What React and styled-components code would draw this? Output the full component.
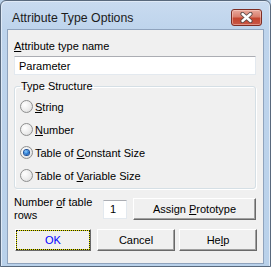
import React from "react";
import styled, { createGlobalStyle } from "styled-components";

const GlobalStyle = createGlobalStyle`
  html, body {
    margin: 0;
    padding: 0;
    background: #b9d1ea;
  }
  body {
    font-family: "Liberation Sans", Arial, sans-serif;
    font-size: 11px;
    color: #000;
  }
`;

const Window = styled.div`
  box-sizing: border-box;
  width: 271px;
  height: 267px;
  border: 1px solid #59697d;
  border-radius: 6px 6px 0 0;
  background: linear-gradient(to bottom, #c9dbf0 0px, #bed4ec 28px, #b9d1ea 100%);
  box-shadow: inset -1px 0 0 #dfeaf7, inset 1px 1px 0 #dfeaf7;
  display: flex;
  flex-direction: column;
  padding: 0 6px 2px;
`;

const TitleBar = styled.div`
  height: 28px;
  flex: none;
  display: flex;
  align-items: center;
  justify-content: space-between;
  padding: 5px 2px 0 5px;
  box-sizing: border-box;
`;

const Title = styled.div`
  font-family: "Liberation Sans", Arial, sans-serif;
  font-size: 12.3px;
  color: #1b1b1b;
`;

const CloseButton = styled.div`
  box-sizing: border-box;
  width: 31px;
  height: 17px;
  border: 1px solid #7d2d24;
  border-radius: 3px;
  background: linear-gradient(to bottom, #e9a99d 0%, #d97f6e 45%, #c4452f 55%, #c95746 100%);
  box-shadow: inset 0 0 0 1px rgba(255, 220, 210, 0.45);
  display: flex;
  align-items: center;
  justify-content: center;
`;

const Client = styled.div`
  flex: 1;
  background: #f0f0f0;
  border: 1px solid #8fa3bd;
  padding: 0 7px 0 6px;
  display: flex;
  flex-direction: column;
`;

const Label = styled.div`
  line-height: 13px;
  margin-top: ${(p) => p.$top || 0}px;
`;

const Key = styled.span`
  text-decoration: underline;
`;

const TextBox = styled.div`
  box-sizing: border-box;
  height: ${(p) => p.$h || 19}px;
  width: ${(p) => (p.$w ? `${p.$w}px` : "auto")};
  margin-top: ${(p) => p.$top || 0}px;
  background: #fff;
  border: 1px solid #e3e9ef;
  border-top-color: #abadb3;
  padding-left: ${(p) => p.$pad || 4}px;
  display: flex;
  align-items: center;
  flex: none;
`;

const Group = styled.fieldset`
  margin: 5px 0 0;
  padding: 2px 5px 1px;
  min-width: 0;
  border: 1px solid #d5dfe5;
  border-radius: 3px;
  box-shadow: inset 1px 1px 0 #fff, 1px 1px 0 #fff;
`;

const Legend = styled.legend`
  padding: 0 1px;
  line-height: 13px;
`;

const RadioRow = styled.div`
  height: 23px;
  display: flex;
  align-items: center;
  gap: 2px;
`;

const RadioDot = styled.span`
  box-sizing: border-box;
  width: 13px;
  height: 13px;
  border-radius: 50%;
  border: 1px solid #8e8f8f;
  background: radial-gradient(circle at 35% 35%, #ffffff 0%, #ececec 55%, #d4d4d4 100%);
  display: flex;
  align-items: center;
  justify-content: center;
  flex: none;

  &::after {
    content: "";
    width: 5px;
    height: 5px;
    border-radius: 50%;
    display: ${(p) => (p.$checked ? "block" : "none")};
    background: radial-gradient(circle at 40% 35%, #8fd0ff 0%, #2a7dd6 50%, #0d3e8a 100%);
    box-shadow: 0 0 0 1px #1a4f9a;
  }
`;

const RowsLine = styled.div`
  margin-top: 7px;
  height: 26px;
  display: flex;
  align-items: center;
`;

const RowsLabel = styled.div`
  width: 89px;
  line-height: 13px;
  flex: none;
`;

const Button = styled.div`
  box-sizing: border-box;
  height: 22px;
  width: ${(p) => (p.$w ? `${p.$w}px` : "auto")};
  flex: ${(p) => (p.$grow ? 1 : "none")};
  margin-left: ${(p) => p.$ml || 0}px;
  background: #f0f0f0;
  border: 1px solid;
  border-color: #ffffff #696969 #696969 #ffffff;
  box-shadow: inset -1px -1px 0 #a0a0a0;
  display: flex;
  align-items: center;
  justify-content: center;
  color: ${(p) => (p.$default ? "#0000ff" : "#000")};
`;

const Focus = styled.div`
  box-sizing: border-box;
  width: 100%;
  height: 100%;
  border: 1px dotted #1a1a1a;
  background: linear-gradient(#f0f0f0, #f0f0f0) padding-box,
    linear-gradient(#e5e500, #e5e500) border-box;
  display: flex;
  align-items: center;
  justify-content: center;
`;

const ButtonRow = styled.div`
  margin-top: 7px;
  display: flex;
  margin-left: 1px;
`;

const options = [
  { pre: "", key: "S", post: "tring" },
  { pre: "", key: "N", post: "umber" },
  { pre: "Table of ", key: "C", post: "onstant Size", checked: true },
  { pre: "Table of ", key: "V", post: "ariable Size" },
];

export default function App() {
  return (
    <>
      <GlobalStyle />
      <Window>
        <TitleBar>
          <Title>Attribute Type Options</Title>
          <CloseButton>
            <svg width="13" height="11" viewBox="0 0 13 11">
              <path d="M2.5 2 L10.5 9 M10.5 2 L2.5 9" stroke="#5c4a48" strokeWidth="4.2" strokeLinecap="round" />
              <path d="M2.5 2 L10.5 9 M10.5 2 L2.5 9" stroke="#ffffff" strokeWidth="2.4" strokeLinecap="round" />
            </svg>
          </CloseButton>
        </TitleBar>
        <Client>
          <Label $top={10}>
            <Key>A</Key>ttribute type name
          </Label>
          <TextBox $top={3}>Parameter</TextBox>
          <Group>
            <Legend>Type Structure</Legend>
            {options.map((o) => (
              <RadioRow key={o.key}>
                <RadioDot $checked={o.checked} />
                <span>
                  {o.pre}
                  <Key>{o.key}</Key>
                  {o.post}
                </span>
              </RadioRow>
            ))}
          </Group>
          <RowsLine>
            <RowsLabel>
              Number <Key>o</Key>f table
              <br />
              rows
            </RowsLabel>
            <TextBox $w={24} $pad={6}>1</TextBox>
            <Button $grow $ml={6}>
              Assign&nbsp;<Key>P</Key>rototype
            </Button>
          </RowsLine>
          <ButtonRow>
            <Button $w={76} $default>
              <Focus>OK</Focus>
            </Button>
            <Button $w={78} $ml={6}>Cancel</Button>
            <Button $w={78} $ml={4}>
              He<Key>l</Key>p
            </Button>
          </ButtonRow>
        </Client>
      </Window>
    </>
  );
}
